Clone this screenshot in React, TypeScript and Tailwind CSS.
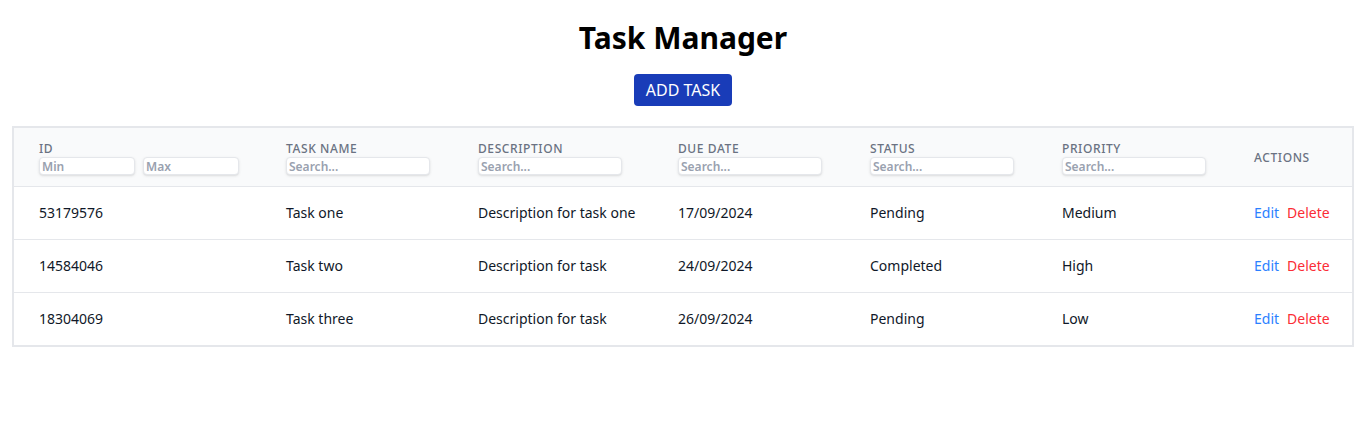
import { useState } from "react";

type Task = {
  id: number;
  name: string;
  description: string;
  dueDate: string;
  status: string;
  priority: string;
};

const TASKS: Task[] = [
  { id: 53179576, name: "Task one", description: "Description for task one", dueDate: "17/09/2024", status: "Pending", priority: "Medium" },
  { id: 14584046, name: "Task two", description: "Description for task", dueDate: "24/09/2024", status: "Completed", priority: "High" },
  { id: 18304069, name: "Task three", description: "Description for task", dueDate: "26/09/2024", status: "Pending", priority: "Low" },
];

const inputCls =
  "block h-[18px] rounded border border-gray-200 bg-white px-0.5 text-xs font-semibold normal-case tracking-normal text-gray-700 shadow-sm placeholder:text-gray-400 focus:outline-none";

const thCls =
  "pl-[25px] pr-6 pt-[13px] pb-[11px] text-left text-xs font-medium uppercase tracking-wider text-gray-500";

function HeaderCell({ label, width }: { label: string; width: string }) {
  return (
    <th className={`${width} ${thCls} align-top`}>
      <div className="leading-4">{label}</div>
      <input placeholder="Search..." className={`${inputCls} w-36`} />
    </th>
  );
}

export default function App() {
  const [tasks] = useState(TASKS);

  return (
    <div className="min-h-screen bg-white px-3 pt-5 font-['Noto_Sans',sans-serif]">
      <h1 className="text-center text-3xl font-bold text-black">Task Manager</h1>
      <div className="mt-[18px] flex justify-center">
        <button className="rounded bg-blue-800 px-3 py-1 text-base text-white">ADD TASK</button>
      </div>

      <table className="mt-5 w-full table-fixed border-collapse border-2 border-gray-200">
        <thead className="bg-gray-50">
          <tr className="border-b border-gray-200">
            <th className={`w-[248px] ${thCls} align-top`}>
              <div className="leading-4">ID</div>
              <div className="flex gap-2">
                <input placeholder="Min" className={`${inputCls} w-24`} />
                <input placeholder="Max" className={`${inputCls} w-24`} />
              </div>
            </th>
            <HeaderCell label="Task Name" width="w-[192px]" />
            <HeaderCell label="Description" width="w-[200px]" />
            <HeaderCell label="Due Date" width="w-[192px]" />
            <HeaderCell label="Status" width="w-[192px]" />
            <HeaderCell label="Priority" width="w-[192px]" />
            <th className={`${thCls} align-middle`}>Actions</th>
          </tr>
        </thead>
        <tbody className="bg-white">
          {tasks.map((t) => (
            <tr key={t.id} className="border-b border-gray-200 text-sm text-gray-900">
              <td className="pl-[25px] pr-6 py-4 whitespace-nowrap">{t.id}</td>
              <td className="pl-[25px] pr-6 py-4 whitespace-nowrap">{t.name}</td>
              <td className="pl-[25px] pr-6 py-4 whitespace-nowrap">{t.description}</td>
              <td className="pl-[25px] pr-6 py-4 whitespace-nowrap">{t.dueDate}</td>
              <td className="pl-[25px] pr-6 py-4 whitespace-nowrap">{t.status}</td>
              <td className="pl-[25px] pr-6 py-4 whitespace-nowrap">{t.priority}</td>
              <td className="pl-[25px] pr-6 py-4 whitespace-nowrap">
                <button className="text-blue-500">Edit</button>
                <button className="ml-2 text-red-500">Delete</button>
              </td>
            </tr>
          ))}
        </tbody>
      </table>
    </div>
  );
}
